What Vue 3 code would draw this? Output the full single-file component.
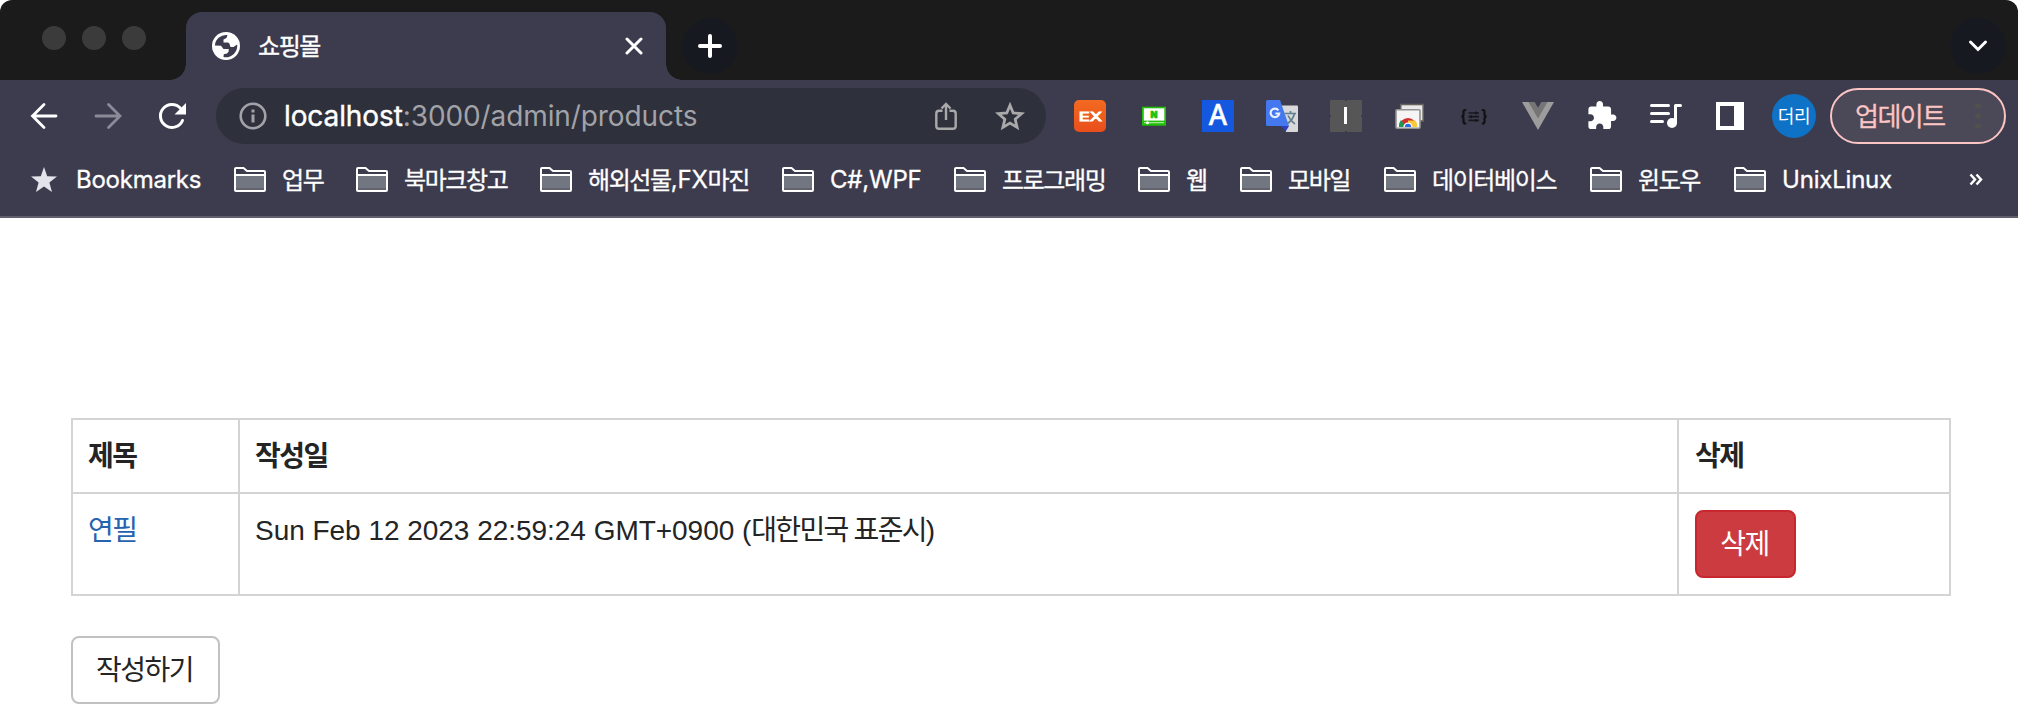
<script setup>
const bookmarks = [
  { parts: [{ t: '업무', ko: true }], width: 122 },
  { parts: [{ t: '북마크창고', ko: true }], width: 184 },
  { parts: [{ t: '해외선물', ko: true }, { t: ',FX' }, { t: '마진', ko: true }], width: 242 },
  { parts: [{ t: 'C#,WPF' }], width: 172 },
  { parts: [{ t: '프로그래밍', ko: true }], width: 184 },
  { parts: [{ t: '웹', ko: true }], width: 102 },
  { parts: [{ t: '모바일', ko: true }], width: 144 },
  { parts: [{ t: '데이터베이스', ko: true }], width: 206 },
  { parts: [{ t: '윈도우', ko: true }], width: 144 },
  { parts: [{ t: 'UnixLinux' }], width: 160 },
]

const products = [
  { id: 1, title: '연필', date: 'Sun Feb 12 2023 22:59:24 GMT+0900 (', zone: '대한민국 표준시' },
]
</script>

<template>
  <div class="window">
    <header class="tabstrip">
      <div class="lights"><i></i><i></i><i></i></div>
      <div class="tab">
        <svg class="globe" width="28" height="28" viewBox="0 0 28 28">
          <circle cx="14" cy="14" r="14" fill="#fff" />
          <path fill="#3d3c4e" d="M2.900 13.500A11.200 11.200 0 0 1 15.500 3L14.500 6 11.500 7.500V10.500H15.500Q17.500 10.500 17.700 12.500L18.500 15H21.500L25.100 12.500A11.200 11.200 0 0 1 11.500 25L11.800 22.300 15 21.500 16.700 19.500V17H11.500L9 13.800Z" />
        </svg>
        <span class="tab-title">쇼핑몰</span>
        <svg class="close" width="18" height="18" viewBox="0 0 18 18"><path d="M2 2 16 16M16 2 2 16" stroke="#fff" stroke-width="3" stroke-linecap="round" /></svg>
      </div>
      <div class="round-btn">
        <svg width="24" height="24" viewBox="0 0 24 24"><path d="M12 2V22M2 12H22" stroke="#fff" stroke-width="4" stroke-linecap="round" /></svg>
      </div>
      <div class="round-btn tab-search">
        <svg width="20" height="14" viewBox="0 0 20 14"><path d="M2.500 3 10 10.500 17.500 3" fill="none" stroke="#fff" stroke-width="3" stroke-linecap="round" stroke-linejoin="miter" /></svg>
      </div>
    </header>

    <div class="toolbar">
      <div class="nav">
        <svg width="32" height="32" viewBox="0 0 32 32"><path d="M16 4.500 4.500 16 16 27.500M4.500 16H28" fill="none" stroke="#fff" stroke-width="2.800" stroke-linecap="round" /></svg>
        <svg width="32" height="32" viewBox="0 0 32 32"><path d="M16.500 4.500 28 16 16.500 27.500M28 16H4" fill="none" stroke="#8b8a98" stroke-width="2.800" stroke-linecap="round" /></svg>
        <svg width="32" height="32" viewBox="0 0 32 32"><path d="M26.500 20.500A11.500 11.500 0 1 1 24.500 8.300" fill="none" stroke="#fff" stroke-width="3" stroke-linecap="round" /><path d="M30 3V14.500H18.500Z" fill="#fff" /></svg>
      </div>

      <div class="omnibox">
        <svg class="info" width="28" height="28" viewBox="0 0 28 28"><circle cx="14" cy="14" r="12.300" fill="none" stroke="#a2a3a8" stroke-width="2.600" /><path d="M12.500 7.500h3v3h-3zM12.500 12.500h3v8h-3z" fill="#a2a3a8" /></svg>
        <span class="url"><b>localhost</b>:3000/admin/products</span>
        <svg class="share" width="22" height="28" viewBox="0 0 22 28"><path d="M7.500 8.700H4Q1.300 8.700 1.300 11.500V24Q1.300 26.700 4 26.700H18Q20.700 26.700 20.700 24V11.500Q20.700 8.700 18 8.700H14.500M11 18V2M6.500 6.500 11 2 15.500 6.500" fill="none" stroke="#aaa9aa" stroke-width="2.400" /></svg>
        <svg class="fav" width="30" height="29" viewBox="0 0 30 29"><path d="M15 3.300 18.200 11 26.600 11.700 20.200 17.200 22.100 25.400 15 21.100 7.900 25.400 9.800 17.200 3.400 11.700 11.800 11Z" fill="none" stroke="#aaa9aa" stroke-width="2.800" /></svg>
      </div>

      <div class="extensions">
        <svg width="32" height="32" viewBox="0 0 32 32"><defs><linearGradient id="ex" x2="0" y2="1"><stop stop-color="#f26a21" /><stop offset="1" stop-color="#e94e1b" /></linearGradient></defs><rect width="32" height="32" rx="5" fill="url(#ex)" /><text x="4.500" y="20.800" class="ex" textLength="23.500" lengthAdjust="spacingAndGlyphs">EX</text></svg>
        <svg width="32" height="32" viewBox="0 0 32 32"><rect x="4" y="6.700" width="24" height="19" fill="#21bf08" /><rect x="5.800" y="8.300" width="20.500" height="12.300" fill="#fff" /><path d="M6 22.700H26" stroke="#c5f2bd" stroke-width="1" /><circle cx="9.500" cy="22.700" r="1.500" fill="#fff" /><text x="16" y="17.700" text-anchor="middle" class="naver">N</text></svg>
        <svg width="32" height="32" viewBox="0 0 32 32"><rect width="32" height="32" fill="#1558e0" /><text x="16" y="25.300" text-anchor="middle" class="letter-a">A</text></svg>
        <svg width="32" height="32" viewBox="0 0 32 32"><path d="M15 5.500H31Q32 5.500 32 6.500V31Q32 32 31 32H20Z" fill="#d9d9dc" /><path d="M15 26H23L19.500 31.800Z" fill="#3040b8" /><path d="M1.500 0H14L23 26H1.500Q0 26 0 24.500V1.500Q0 0 1.500 0Z" fill="#4378ee" /><path d="M18.500 13.500H30M24.500 11V13.500M28.500 13.500Q27 20 20.800 24M22 15.500Q24.500 21 29 24" fill="none" stroke="#60808e" stroke-width="1.700" /><path d="M12.400 10.300A4.300 4.300 0 1 0 13.200 13.500H9.300" fill="none" stroke="#e8effe" stroke-width="2.200" /></svg>
        <svg width="32" height="32" viewBox="0 0 32 32"><rect width="32" height="32" rx="1" fill="#565656" /><path d="M14 7H17V24H14Z" fill="#fff" /><path d="M15 0H17V1H15ZM15 31H17V32H15ZM0 15H1V17H0ZM31 15H32V17H31Z" fill="#3d3c4e" /></svg>
        <svg width="32" height="32" viewBox="0 0 32 32"><rect x="6.700" y="4.500" width="22.500" height="16.500" fill="#e9e9e9" stroke="#65615c" stroke-width="1.600" /><rect x="2" y="9.800" width="24" height="18.500" rx="1" fill="#f5f5f5" stroke="#929292" stroke-width="1.600" /><path d="M5 27A9 9 0 0 1 23 27Z" fill="#d2302f" /><path d="M5 27A9 9 0 0 1 7 20L12.500 27Z" fill="#229650" /><path d="M14 20.500H21.500A9 9 0 0 1 23 27H14Z" fill="#fac83b" /><path d="M9.400 27A4.500 4.500 0 0 1 18.400 27Z" fill="#fff" /><path d="M10.800 27A3.200 3.200 0 1 1 17.200 27Z" fill="#2d6ce8" /></svg>
        <svg width="32" height="32" viewBox="0 0 32 32"><path d="M8.200 10H7.200Q5.500 10 5.500 12V14.500Q5.500 16.500 3.300 16.500 5.500 16.500 5.500 18.500V21.500Q5.500 23.500 7.200 23.500H8.200M23.800 10H24.800Q26.500 10 26.500 12V14.500Q26.500 16.500 28.700 16.500 26.500 16.500 26.500 18.500V21.500Q26.500 23.500 24.800 23.500H23.800" fill="none" stroke="#111" stroke-width="2.200" /><path d="M10.500 13H21M10.500 16.700H21M10.500 20.400H21M18 11.500V14.500M13 15.200V18.200M18 18.900V21.900" stroke="#17171a" stroke-width="1.700" /></svg>
        <svg width="32" height="32" viewBox="0 0 32 32"><path d="M0 2H32L16 30Z" fill="#9c9c9c" /><path d="M6.500 2H12.500L16 8 19.500 2H25.500L16 18.500Z" fill="#757575" /><path d="M12.500 2H19.500L16 8Z" fill="#3d3c4e" /></svg>
        <svg width="32" height="32" viewBox="0 0 24 24"><path fill="#fff" transform="translate(-.2 -.2)" d="M20.500 11H19V7c0-1.100-.9-2-2-2h-4V3.500C13 2.120 11.880 1 10.500 1S8 2.120 8 3.500V5H4c-1.100 0-1.990.9-1.990 2v3.800H3.500c1.490 0 2.700 1.210 2.700 2.700s-1.210 2.700-2.700 2.700H2V20c0 1.100.9 2 2 2h3.800v-1.500c0-1.490 1.210-2.700 2.700-2.700 1.490 0 2.700 1.210 2.700 2.700V22H17c1.100 0 2-.9 2-2v-4h1.500c1.380 0 2.500-1.120 2.500-2.500S21.880 11 20.500 11z" /></svg>
        <svg width="32" height="32" viewBox="0 0 32 32"><path d="M1.500 5.500H18.500M1.500 13.500H18.500M1.500 21.500H12.500M25.500 22V5.500H30.500" fill="none" stroke="#fff" stroke-width="3" stroke-linecap="round" stroke-linejoin="round" /><circle cx="22" cy="23" r="5" fill="#fff" /></svg>
        <svg width="32" height="32" viewBox="0 0 32 32"><path fill="#fff" fill-rule="evenodd" d="M2 2H30V30H2ZM6 6V26H20V6Z" /></svg>
      </div>
      <div class="avatar">더리</div>
      <div class="update"><span>업데이트</span><div class="dots"><i></i><i></i><i></i></div></div>
    </div>

    <div class="bookmarks">
      <svg class="bm-star" width="26" height="26" viewBox="0 0 26 26"><path d="M13 0 16.200 9.200 26 9.600 18.400 15.600 21 25 13 19.600 5 25 7.600 15.600 0 9.600 9.800 9.200Z" fill="#e1e4ea" /></svg>
      <span class="bm-root">Bookmarks</span>
      <div v-for="(b, i) in bookmarks" :key="i" class="bm" :style="{ width: b.width + 'px' }">
        <svg width="32" height="26" viewBox="0 0 32 26"><path d="M1 24V2Q1 1 2 1H9.500L13 4.500H30Q31 4.500 31 5.500V24Z" fill="#3d3c4e" /><path d="M1 8.500H31V24H1Z" fill="#727681" /><path d="M2 21H30V23H2Z" fill="#63636f" /><path d="M1 8H31M1 23.500V2Q1 1 2 1H9.500L13 4H30Q31 4 31 5V23Q31 24 30 24H2Q1 24 1 23Z" fill="none" stroke="#fff" stroke-width="2" /></svg>
        <div class="bm-label"><span v-for="p in b.parts" :key="p.t" :class="{ ko: p.ko }">{{ p.t }}</span></div>
      </div>
      <svg class="more" width="14" height="14" viewBox="0 0 14 14"><path d="M1.500 1.500 6 6.500 1.500 11.500M7.500 1.500 12 6.500 7.500 11.500" fill="none" stroke="#fff" stroke-width="2.500" /></svg>
    </div>

    <main class="page">
      <div class="table">
        <div class="row head"><div>제목</div><div>작성일</div><div>삭제</div></div>
        <div v-for="p in products" :key="p.id" class="row">
          <div><a>{{ p.title }}</a></div>
          <div class="date"><span class="latin">{{ p.date }}</span>{{ p.zone }}<span class="latin">)</span></div>
          <div class="action"><button class="btn danger">삭제</button></div>
        </div>
      </div>
      <button class="btn write">작성하기</button>
    </main>
  </div>
</template>

<style>
body { margin: 0; background: #fff; overflow: hidden; }
</style>

<style scoped>
.window { box-sizing: border-box; width: 2018px; height: 722px; background: #fff; font-family: Inter, "Noto Sans CJK KR", sans-serif; }
svg { display: block; flex: none; }
.tabstrip { display: flex; height: 80px; background: #1b1b1b; border-radius: 12px 12px 0 0; }
.lights { display: flex; gap: 16px; width: 144px; padding: 26px 0 0 42px; }
.lights i { width: 24px; height: 24px; border-radius: 50%; background: #3b3b3b; }
.tab { position: relative; box-sizing: border-box; display: flex; align-items: center; width: 480px; height: 68px; margin-top: 12px; padding: 0 23px 0 26px; background: #3d3c4e; border-radius: 16px 16px 0 0; color: #fff; }
.tab::before, .tab::after { content: ""; position: absolute; bottom: 0; width: 16px; height: 16px; }
.tab::before { left: -16px; background: radial-gradient(circle at 0 0, #1b1b1b 15.500px, #3d3c4e 16px); }
.tab::after { right: -16px; background: radial-gradient(circle at 100% 0, #1b1b1b 15.500px, #3d3c4e 16px); }
.tab-title { margin: -3px 0 0 18px; font: 400 24px/34px "Noto Sans CJK KR", sans-serif; letter-spacing: -1.400px; -webkit-text-stroke: .35px #fff; }
.close { margin-left: auto; }
.round-btn { display: flex; align-items: center; justify-content: center; width: 56px; height: 56px; margin: 18px 0 0 16px; border-radius: 50%; background: #171921; }
.tab-search { margin-left: auto; margin-right: 12px; }

.toolbar { display: flex; align-items: center; height: 56px; padding: 8px 12px 0 28px; background: #3d3c4e; }
.nav { display: flex; gap: 32px; }
.nav svg { margin-top: -1px; }
.omnibox { box-sizing: border-box; display: flex; align-items: center; width: 830px; height: 56px; margin-left: 28px; padding: 0 21px 0 23px; border-radius: 28px; background: #2e303b; }
.url { margin-left: 17px; font: 400 28px/40px Inter, sans-serif; letter-spacing: -.1px; color: #a2a3a8; white-space: nowrap; }
.url b { font-weight: 400; color: #fff; -webkit-text-stroke: .4px #fff; }
.share { margin-left: auto; margin-right: 38px; }
.extensions { display: flex; gap: 32px; margin-left: 28px; }
.extensions svg { overflow: visible; }
.ex { font: 400 12.500px "DejaVu Sans", sans-serif; fill: #fff; stroke: #fff; stroke-width: .9px; }
.naver { font: 900 9px Inter, sans-serif; fill: #21bf08; stroke: #21bf08; stroke-width: .7px; }
.letter-a { font: 500 28px "Noto Sans", sans-serif; fill: #fff; stroke: #fff; stroke-width: .4px; }
.avatar { width: 44px; height: 44px; margin-left: 26px; border-radius: 50%; background: #0e72c6; color: #fff; font: 400 18px/43px "Noto Sans CJK KR", sans-serif; letter-spacing: -.3px; text-align: center; }
.update { box-sizing: border-box; display: flex; align-items: center; width: 176px; height: 56px; margin-left: 14px; padding: 0 23px 0 23px; border: 2px solid #fac5c3; border-radius: 28px; background: #4b4857; color: #fac5c3; font: 400 26px/50px "Noto Sans CJK KR", sans-serif; letter-spacing: -1.500px; white-space: nowrap; }
.update span { padding-bottom: 2px; -webkit-text-stroke: .3px #fac5c3; }
.dots { display: flex; flex-direction: column; gap: 4px; margin-left: auto; }
.dots i { width: 6px; height: 6px; border-radius: 50%; background: #50504f; }

.bookmarks { display: flex; align-items: center; height: 72px; padding-left: 31px; background: #3d3c4e; border-bottom: 2px solid #62606f; color: #fff; }
.bm-root { width: 158px; margin-left: 19px; font: 400 24px/34px Inter, sans-serif; letter-spacing: -.25px; -webkit-text-stroke: .3px #fff; }
.bm { display: flex; flex: none; align-items: center; white-space: nowrap; }
.bm-label { display: flex; align-items: center; height: 34px; margin-left: 16px; font: 400 24px/34px Inter, sans-serif; letter-spacing: -.2px; -webkit-text-stroke: .3px #fff; }
.ko { margin-top: -3px; font: 400 24px/34px "Noto Sans CJK KR", sans-serif; letter-spacing: -1.400px; }
.more { margin-left: 75px; }

.page { padding: 200px 67px 0 71px; font-family: "Noto Sans CJK KR", sans-serif; font-size: 28px; line-height: 42px; letter-spacing: -1.500px; color: #242424; }
.table { border: solid #d4d4d4; border-width: 2px 0 0 2px; }
.row { display: grid; grid-template-columns: 167px 1439px 272px; height: 102px; }
.row.head { height: 74px; font-weight: 700; }
.row > div { box-sizing: border-box; padding: 13px 15px; border: solid #d4d4d4; border-width: 0 2px 2px 0; }
.row > .date { letter-spacing: -1.700px; word-spacing: 1.500px; }
.row > .action { padding: 16px; }
.row.head > div:last-child { padding-left: 16px; }
.row a { color: #2563ae; }
.latin { font-family: "Liberation Sans", sans-serif; letter-spacing: -.03px; word-spacing: 0; }
.btn { display: block; box-sizing: border-box; height: 68px; padding: 0 0 4px; border-radius: 8px; font: inherit; letter-spacing: inherit; color: inherit; }
.danger { width: 101px; padding-right: 2px; border: 2px solid #c8282d; background: #cb3b40; color: #fff; }
.write { width: 149px; margin-top: 40px; padding-right: 2px; border: 2px solid #c1c1c1; background: #fff; }
</style>
